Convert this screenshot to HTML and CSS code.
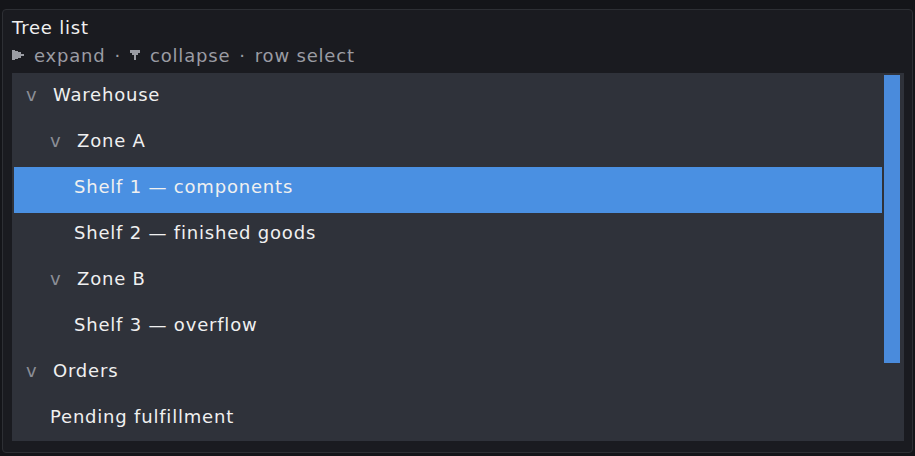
FILE: index.html
```html
<!DOCTYPE html>
<html lang="en">
<head>
    <meta charset="UTF-8">
    <meta name="viewport" content="width=device-width, initial-scale=1">
    <title>Tree list</title>
    <link rel="stylesheet" href="styles.css">
</head>
<body>
    <div class="panel">
        <div class="panel-title">Tree list</div>
        <div class="panel-hint">
            <svg class="hint-icon" width="12" height="10" viewBox="0 0 12 10"><path d="M0 0H3V1H6V2H9V4H12V6H9V8H6V9H3V10H0Z" fill="#9a9ca3"/></svg>
            <span>expand</span>
            <span class="dot">·</span>
            <svg class="hint-icon" width="10" height="10" viewBox="0 0 10 10"><path d="M0 0H10V3H8V5H6V10H4V5H2V3H0Z" fill="#9a9ca3"/></svg>
            <span>collapse</span>
            <span class="dot">·</span>
            <span>row select</span>
        </div>

        <div class="tree">
            <div class="tree-rows">
                <div class="row depth-0"><span class="toggle">v</span>Warehouse</div>
                <div class="row depth-1"><span class="toggle">v</span>Zone A</div>
                <div class="row depth-2 selected">Shelf 1 — components</div>
                <div class="row depth-2">Shelf 2 — finished goods</div>
                <div class="row depth-1"><span class="toggle">v</span>Zone B</div>
                <div class="row depth-2">Shelf 3 — overflow</div>
                <div class="row depth-0"><span class="toggle">v</span>Orders</div>
                <div class="row depth-1">Pending fulfillment</div>
            </div>
            <div class="scrollbar">
                <div class="scroll-thumb"></div>
            </div>
        </div>
    </div>
</body>
</html>
```

FILE: styles.css
```css
body {
    margin: 0;
    padding: 9px 2px 3px 2px;
    background-color: #141519;
    font-family: "DejaVu Sans", sans-serif;
    font-size: 18px;
    letter-spacing: 0.8px;
    color: #f0f0f0;
}

.panel {
    background-color: #1a1b20;
    border: 1px solid #2d2f34;
    border-radius: 4px;
    padding: 6px 8px 11px 9px;
}

.panel-title {
    line-height: 24px;
}

.panel-hint {
    display: flex;
    align-items: center;
    gap: 10px;
    height: 24px;
    padding-top: 3px;
    color: #9a9ca3;
}

.hint-icon {
    display: block;
}

.dot {
    margin: 0 -1px;
}

.tree {
    display: flex;
    gap: 2px;
    height: 368px;
    margin-top: 6px;
    padding: 2px 4px 2px 2px;
    box-sizing: border-box;
    background-color: #2f323a;
}

.tree-rows {
    flex: 1;
    overflow: hidden;
}

.row {
    height: 46px;
    line-height: 40px;
    padding-bottom: 6px;
    box-sizing: border-box;
    white-space: nowrap;
}

.row.selected {
    background-color: #4a90e2;
}

.depth-0 { padding-left: 12px; }
.depth-1 { padding-left: 36px; }
.depth-2 { padding-left: 60px; }

.toggle {
    display: inline-block;
    width: 27px;
    color: #8b8e96;
}

.scrollbar {
    width: 16px;
}

.scroll-thumb {
    height: 288px;
    background-color: #4a8bdc;
}
```
